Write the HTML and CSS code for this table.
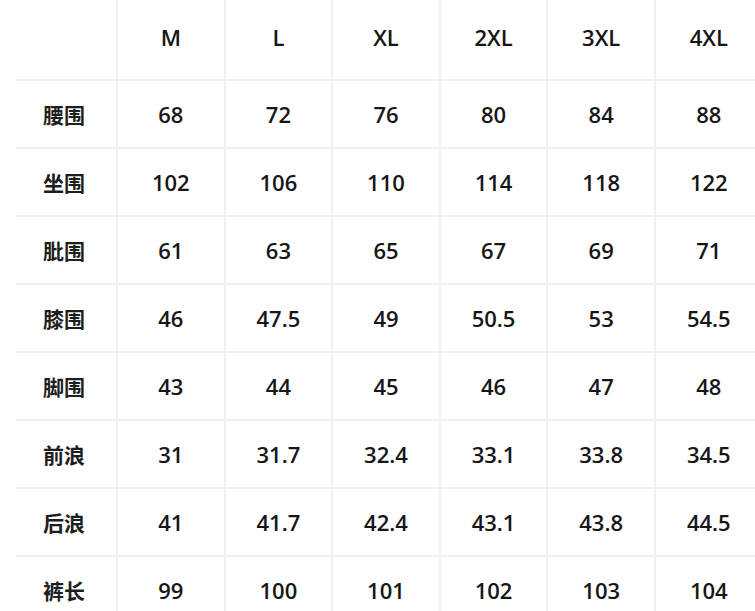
FILE: index.html
```html
<!DOCTYPE html>
<html lang="zh">
<head>
<meta charset="utf-8">
<link rel="stylesheet" href="styles.css">
</head>
<body>
<div class="chart">
  <div class="cell head label"></div>
  <div class="cell head">M</div>
  <div class="cell head">L</div>
  <div class="cell head">XL</div>
  <div class="cell head">2XL</div>
  <div class="cell head">3XL</div>
  <div class="cell head">4XL</div>

  <div class="cell label">腰围</div>
  <div class="cell">68</div><div class="cell">72</div><div class="cell">76</div><div class="cell">80</div><div class="cell">84</div><div class="cell">88</div>

  <div class="cell label">坐围</div>
  <div class="cell">102</div><div class="cell">106</div><div class="cell">110</div><div class="cell">114</div><div class="cell">118</div><div class="cell">122</div>

  <div class="cell label">肶围</div>
  <div class="cell">61</div><div class="cell">63</div><div class="cell">65</div><div class="cell">67</div><div class="cell">69</div><div class="cell">71</div>

  <div class="cell label">膝围</div>
  <div class="cell">46</div><div class="cell">47.5</div><div class="cell">49</div><div class="cell">50.5</div><div class="cell">53</div><div class="cell">54.5</div>

  <div class="cell label">脚围</div>
  <div class="cell">43</div><div class="cell">44</div><div class="cell">45</div><div class="cell">46</div><div class="cell">47</div><div class="cell">48</div>

  <div class="cell label">前浪</div>
  <div class="cell">31</div><div class="cell">31.7</div><div class="cell">32.4</div><div class="cell">33.1</div><div class="cell">33.8</div><div class="cell">34.5</div>

  <div class="cell label">后浪</div>
  <div class="cell">41</div><div class="cell">41.7</div><div class="cell">42.4</div><div class="cell">43.1</div><div class="cell">43.8</div><div class="cell">44.5</div>

  <div class="cell label">裤长</div>
  <div class="cell">99</div><div class="cell">100</div><div class="cell">101</div><div class="cell">102</div><div class="cell">103</div><div class="cell">104</div>
</div>
</body>
</html>
```
FILE: styles.css
```css
html, body {
  margin: 0;
  padding: 0;
  background: #ffffff;
  overflow: hidden;
}
body {
  width: 755px;
  height: 611px;
  padding-left: 16px;
  box-sizing: border-box;
}
.chart {
  display: grid;
  grid-template-columns: 102px repeat(6, 107.6px);
  grid-template-rows: 81px repeat(8, 68px);
  width: max-content;
  font-family: "Open Sans", "Noto Sans CJK SC", sans-serif;
  font-size: 22px;
  font-weight: 600;
  color: #161616;
}
.cell {
  display: flex;
  align-items: center;
  justify-content: center;
  border-right: 2px solid #f0f0f0;
  border-bottom: 2px solid #f0f0f0;
  box-sizing: border-box;
}
.head {
  padding-bottom: 6px;
}
.label {
  font-family: "Noto Sans CJK SC", sans-serif;
  font-weight: 700;
  font-size: 21px;
  color: #1e1e1e;
  padding-right: 4px;
}
```
